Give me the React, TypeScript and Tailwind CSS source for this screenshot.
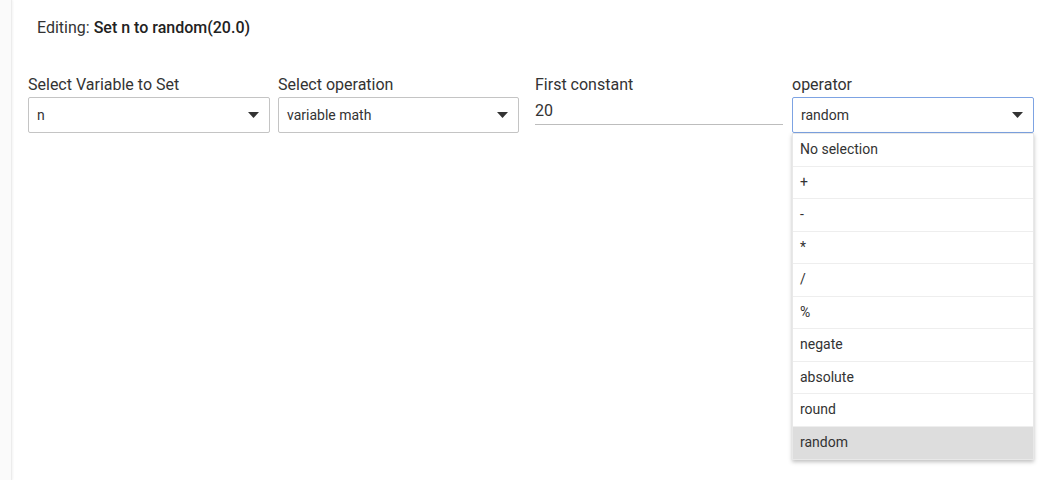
import React from 'react';

const ops = ['No selection', '+', '-', '*', '/', '%', 'negate', 'absolute', 'round', 'random'];

const Caret: React.FC = () => (
  <svg width="11" height="6" viewBox="0 0 11 6" className="shrink-0">
    <path d="M0 0 L11 0 L5.5 6 Z" fill="#333" />
  </svg>
);

const SelectBox: React.FC<{ label: string; value: string; width: string; focused?: boolean; className?: string }> = ({
  label,
  value,
  width,
  focused,
  className,
}) => (
  <div className={`${width} ${className ?? ''} flex flex-col`}>
    <label className="text-[16px] leading-[20px] text-[#333] mt-[1px] mb-[2px]">{label}</label>
    <div
      className={`h-[36px] flex items-center justify-between pl-[8px] pr-[10px] rounded-[2px] bg-white border ${
        focused ? 'border-[#7da3e3]' : 'border-[#c4c4c4]'
      }`}
    >
      <span className="text-[14px] text-[#333]">{value}</span>
      <Caret />
    </div>
  </div>
);

export default function App() {
  return (
    <div className="w-[1061px] h-[480px] flex bg-white overflow-hidden" style={{ fontFamily: 'Roboto, "Noto Sans", sans-serif' }}>
      <div className="w-[12px] h-full bg-[#fafafa] border-r border-[#ececec] shadow-[1px_0_2px_rgba(0,0,0,0.05)]" />
      <div className="flex-1 flex flex-col">
        <div className="pl-[25px] pt-[18px] text-[16px] leading-[20px] text-[#333]">
          Editing: <span className="font-medium text-[#222]">Set n to random(20.0)</span>
        </div>
        <div className="flex pl-[16px] mt-[36px]">
          <SelectBox label="Select Variable to Set" value="n" width="w-[242px]" />
          <SelectBox label="Select operation" value="variable math" width="w-[241px]" className="ml-[8px]" />
          <div className="w-[248px] ml-[16px] flex flex-col">
            <label className="text-[16px] leading-[20px] text-[#333] mt-[1px]">First constant</label>
            <div className="h-[30px] pt-[6px] border-b border-[#bdbdbd] text-[16px] text-[#333] leading-[20px]">20</div>
          </div>
          <div className="relative ml-[9px]">
            <SelectBox label="operator" value="random" width="w-[242px]" focused />
            <div className="absolute left-0 top-[59px] w-[242px] bg-white shadow-[0_2px_4px_rgba(0,0,0,0.25)] border border-[#e8e8e8]">
              {ops.map((o, i) => (
                <div
                  key={o}
                  className={`h-[32.5px] flex items-center px-[7px] text-[14px] text-[#333] ${
                    i < ops.length - 1 ? 'border-b border-[#eeeeee]' : ''
                  } ${o === 'random' ? 'bg-[#dddddd]' : ''}`}
                >
                  {o}
                </div>
              ))}
            </div>
          </div>
        </div>
      </div>
    </div>
  );
}
